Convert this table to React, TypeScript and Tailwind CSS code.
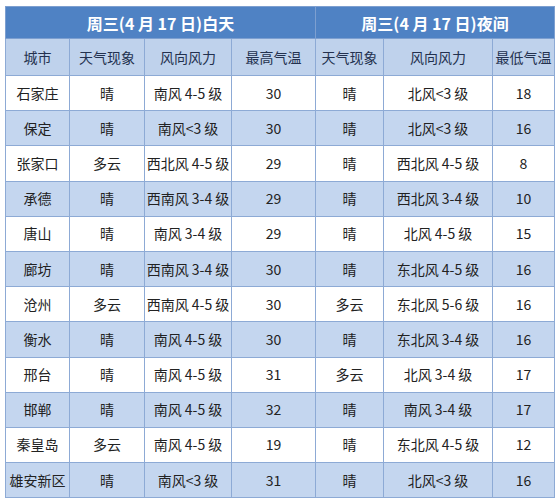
const rows: [string, string, string, string, string, string, string][] = [
  ["石家庄", "晴", "南风 4-5 级", "30", "晴", "北风<3 级", "18"],
  ["保定", "晴", "南风<3 级", "30", "晴", "北风<3 级", "16"],
  ["张家口", "多云", "西北风 4-5 级", "29", "晴", "西北风 4-5 级", "8"],
  ["承德", "晴", "西南风 3-4 级", "29", "晴", "西北风 3-4 级", "10"],
  ["唐山", "晴", "南风 3-4 级", "29", "晴", "北风 4-5 级", "15"],
  ["廊坊", "晴", "西南风 3-4 级", "30", "晴", "东北风 4-5 级", "16"],
  ["沧州", "多云", "西南风 4-5 级", "30", "多云", "东北风 5-6 级", "16"],
  ["衡水", "晴", "南风 4-5 级", "30", "晴", "东北风 3-4 级", "16"],
  ["邢台", "晴", "南风 4-5 级", "31", "多云", "北风 3-4 级", "17"],
  ["邯郸", "晴", "南风 4-5 级", "32", "晴", "南风 3-4 级", "17"],
  ["秦皇岛", "多云", "南风 4-5 级", "19", "晴", "东北风 4-5 级", "12"],
  ["雄安新区", "晴", "南风<3 级", "31", "晴", "北风<3 级", "16"],
]

const headers = ["城市", "天气现象", "风向风力", "最高气温", "天气现象", "风向风力", "最低气温"]
const widths = ["w-[64px]", "w-[75px]", "w-[87px]", "w-[84px]", "w-[68px]", "w-[109px]", "w-[62px]"]

export default function App() {
  return (
    <div
      className="w-[558px] h-[500px] bg-white pl-[5px] pt-[6px]"
      style={{ fontFamily: '"Noto Sans CJK SC", "Noto Sans", sans-serif' }}
    >
      <table className="border-collapse table-fixed w-[549px] text-[14px] text-center">
        <colgroup>
          {widths.map((w, i) => (
            <col key={i} className={w} />
          ))}
        </colgroup>
        <thead>
          <tr className="h-[32px] bg-[#4f82c4] text-white font-bold text-[16px]">
            <th colSpan={4} className="border border-[#7d9fd0] font-bold">
              周三(4 月 17 日)白天
            </th>
            <th colSpan={3} className="border border-[#7d9fd0] font-bold">
              周三(4 月 17 日)夜间
            </th>
          </tr>
          <tr className="h-[37px] bg-[#bfd2ec] text-[#23314f]">
            {headers.map((h, i) => (
              <th key={i} className="border border-[#8daad5] font-normal">
                {h}
              </th>
            ))}
          </tr>
        </thead>
        <tbody>
          {rows.map((r, i) => (
            <tr
              key={i}
              className={`h-[35.2px] text-[#222] ${i % 2 === 1 ? "bg-[#c4d6ef]" : "bg-white"}`}
            >
              {r.map((c, j) => (
                <td key={j} className="border border-[#8daad5] whitespace-nowrap">
                  {c}
                </td>
              ))}
            </tr>
          ))}
        </tbody>
      </table>
    </div>
  )
}
